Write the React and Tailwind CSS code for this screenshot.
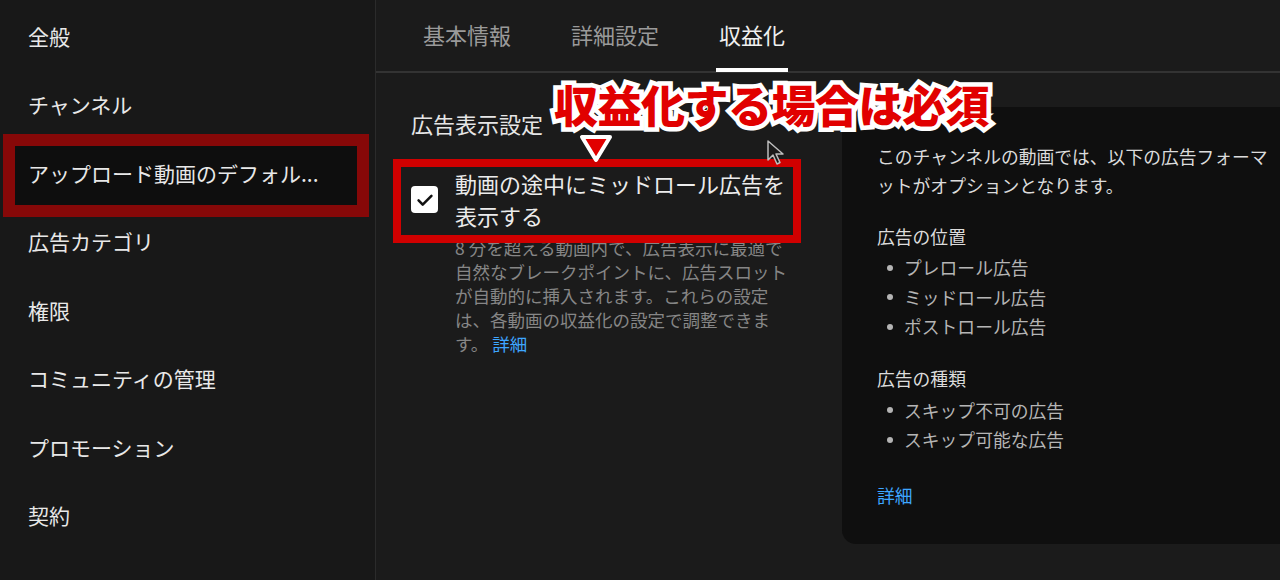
import React from 'react';

const FONT = { fontFamily: '"Noto Sans CJK JP", "Noto Sans", sans-serif' };

const menu = [
  '全般',
  'チャンネル',
  'アップロード動画のデフォル...',
  '広告カテゴリ',
  '権限',
  'コミュニティの管理',
  'プロモーション',
  '契約',
];

const tabs = ['基本情報', '詳細設定', '収益化'];

function Bullet({ children }) {
  return (
    <li className="flex items-center h-[29.5px] pl-[10px] text-[#b5b5b5]">
      <span className="w-[6px] h-[6px] rounded-full bg-[#b5b5b5] mr-[11px]" />
      {children}
    </li>
  );
}

export default function App() {
  return (
    <div className="relative w-[1280px] h-[580px] overflow-hidden flex bg-[#1b1b1b] text-[#e8e8e8]" style={FONT}>
      {/* sidebar */}
      <aside className="w-[376px] shrink-0 bg-[#181818] border-r border-[#2b2b2b] pt-[2px]">
        {menu.map((label, i) => (
          <div key={label} className="relative h-[68.5px] flex items-center text-[21px]">
            {i === 2 ? (
              <>
                <div className="absolute left-[15px] right-[18px] top-[6px] bottom-[3px] bg-[#0e0e0e]" />
                <span className="relative pl-[28px]">{label}</span>
                <div className="absolute left-[3px] right-[6px] top-[-5px] bottom-[-9px] border-[12px] border-[#860808]" />
              </>
            ) : (
              <span className="pl-[28px]">{label}</span>
            )}
          </div>
        ))}
      </aside>

      {/* main */}
      <main className="flex-1 flex flex-col min-w-0">
        <div className="h-[73px] shrink-0 border-b-2 border-[#333] flex items-stretch pl-[44px] gap-[54px]">
          {tabs.map((t, i) => (
            <div key={t} className={`relative flex items-center px-[3px] pb-[3px] text-[22px] ${i === 2 ? 'text-[#f0f0f0]' : 'text-[#9a9a9a]'}`}>
              {t}
              {i === 2 && <span className="absolute left-0 right-0 bottom-[-1px] h-[4px] bg-white" />}
            </div>
          ))}
        </div>

        <div className="flex flex-1 min-h-0">
          {/* left column */}
          <section className="w-[466px] shrink-0 pl-[35px] pt-[35px]">
            <h2 className="text-[22px] leading-[30px] text-[#e6e6e6]">広告表示設定</h2>
            <div className="flex mt-[29px]">
              <div className="w-[27px] h-[27px] mt-[19px] rounded-[4px] bg-white flex items-center justify-center shrink-0">
                <svg viewBox="0 0 24 24" className="w-[22px] h-[22px]" fill="none" stroke="#111" strokeWidth="2.8" strokeLinecap="round" strokeLinejoin="round">
                  <path d="M5 12.5l4.5 4.5L19 7.5" />
                </svg>
              </div>
              <div className="ml-[17px]">
                <p className="text-[22px] leading-[32px] text-[#ececec]">
                  動画の途中にミッドロール広告を<br />表示する
                </p>
                <p className="mt-[5px] text-[17.5px] leading-[24px] text-[#868686]">
                  8 分を超える動画内で、広告表示に最適で<br />
                  自然なブレークポイントに、広告スロット<br />
                  が自動的に挿入されます。これらの設定<br />
                  は、各動画の収益化の設定で調整できま<br />
                  す。 <span className="text-[#3ea6ff]">詳細</span>
                </p>
              </div>
            </div>
          </section>

          {/* right panel */}
          <section className="flex-1 pt-[34px]">
            <div className="h-[437px] bg-[#0f0f0f] rounded-bl-[14px] pl-[35px] pt-[35px] text-[17.8px]">
              <p className="leading-[29px] text-[#dcdcdc]">
                このチャンネルの動画では、以下の広告フォーマ<br />ットがオプションとなります。
              </p>
              <h3 className="mt-[22px] leading-[29px] text-[#dcdcdc]">広告の位置</h3>
              <ul className="mt-[2px]">
                <Bullet>プレロール広告</Bullet>
                <Bullet>ミッドロール広告</Bullet>
                <Bullet>ポストロール広告</Bullet>
              </ul>
              <h3 className="mt-[22px] leading-[29px] text-[#dcdcdc]">広告の種類</h3>
              <ul className="mt-[3px]">
                <Bullet>スキップ不可の広告</Bullet>
                <Bullet>スキップ可能な広告</Bullet>
              </ul>
              <p className="mt-[26px] leading-[29px] text-[#3ea6ff]">詳細</p>
            </div>
          </section>
        </div>
      </main>

      {/* annotation overlays */}
      <div className="absolute left-[393px] top-[159px] w-[408px] h-[84px] border-[8px] border-[#d00000]" />

      <div className="absolute left-[554px] top-[82px] text-[44px] leading-none font-black tracking-[-0.5px] whitespace-nowrap">
        <span className="absolute left-0 top-0 text-white [-webkit-text-stroke:9px_white]">収益化する場合は必須</span>
        <span className="relative text-[#e10000]">収益化する場合は必須</span>
      </div>

      <svg className="absolute left-[578px] top-[133px]" width="36" height="32" viewBox="0 0 36 32">
        <polygon points="4,4 32,4 18,27" fill="#e10000" stroke="white" strokeWidth="4" strokeLinejoin="round" />
      </svg>

      <svg className="absolute left-[766px] top-[139px]" width="22" height="28" viewBox="0 0 22 28">
        <path d="M2 2 L2 21 L7 16 L11 25 L14 23.5 L10 15 L17 15 Z" fill="#1a1a1a" stroke="#bdbdbd" strokeWidth="1.5" strokeLinejoin="round" />
      </svg>
    </div>
  );
}
